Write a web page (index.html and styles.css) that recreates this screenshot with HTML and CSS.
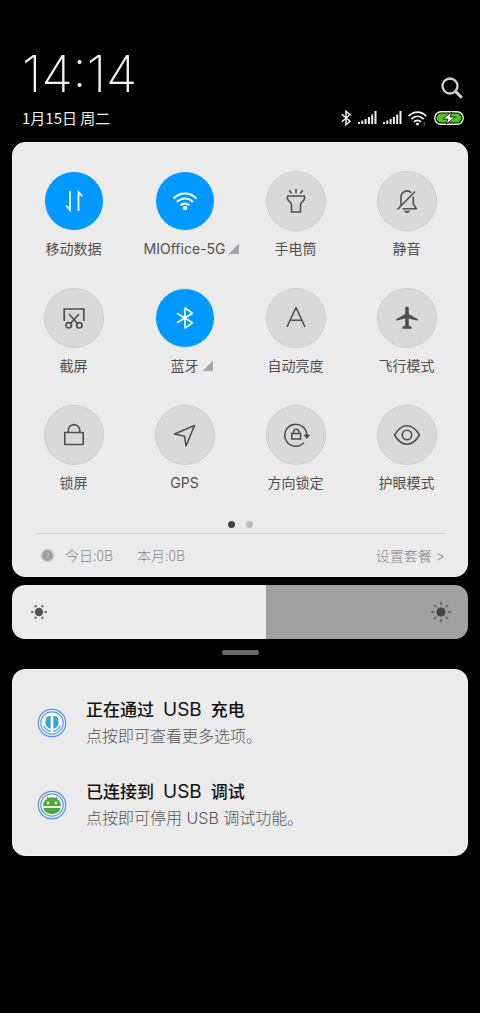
FILE: index.html
```html
<!DOCTYPE html>
<html lang="zh-CN">
<head>
<meta charset="utf-8">
<meta name="viewport" content="width=device-width, initial-scale=1">
<title>控制中心</title>
<link rel="stylesheet" href="styles.css">
</head>
<body>
<header class="header">
  <div class="header-top">
    <time class="clock">14:14</time>
    <button class="search" aria-label="搜索">
      <svg width="22" height="22" viewBox="0 0 22 22" fill="none" stroke="#d2d2d2"><circle cx="9" cy="9" r="7.500" stroke-width="2.300"/><path d="M14.300 14.300 20.800 20.800" stroke-width="3"/></svg>
    </button>
  </div>
  <div class="header-bottom">
    <span class="date">1月15日 周二</span>
    <div class="status">
      <svg class="st-bt" width="10" height="16" viewBox="0 0 10 16" fill="none" stroke="#f2f2f2" stroke-width="1.5"><path d="M.8 4.2 9 11.3 5 14.7V1.3l4 3.4L.8 11.8"/></svg>
      <svg class="st-sig" width="19" height="14" viewBox="0 0 19 14" fill="#f2f2f2"><path d="M0 11h2v2H0zM3.3 9.5h2V13h-2zM6.6 8h2v5h-2zM9.9 6h2v7h-2zM13.2 3.5h2V13h-2zM16.5 0h2v13h-2z"/></svg>
      <svg class="st-sig" width="19" height="14" viewBox="0 0 19 14" fill="#f2f2f2"><path d="M0 11h2v2H0zM3.3 9.5h2V13h-2zM6.6 8h2v5h-2zM9.9 6h2v7h-2zM13.2 3.5h2V13h-2zM16.5 0h2v13h-2z"/></svg>
      <svg class="st-wifi" width="20" height="15" viewBox="0 0 20 15" fill="none" stroke="#f2f2f2" stroke-width="1.9"><path d="M.8 5.2C6-.2 13-.2 18.2 5.2M3.3 8.2c3.8-3.8 8.6-3.8 12.400 0M6 11c2.200-2.200 4.800-2.200 7 0"/><circle cx="9.500" cy="13" r="1.500" fill="#f2f2f2" stroke="none"/><path d="M16.200 11v3.500" stroke-width="1" stroke="#888"/></svg>
      <svg width="30" height="14" viewBox="0 0 30 14"><rect x=".8" y=".8" width="28.400" height="12.400" rx="6.200" fill="#000" stroke="#f2f2f2" stroke-width="1.400"/><rect x="2.600" y="2.600" width="24.800" height="8.800" rx="4.400" fill="#4fc51c"/><path d="M17.800.8 9 8h5l-2 5.200L21.200 6H16z" fill="#fff" stroke="#000" stroke-width=".8"/></svg>
    </div>
  </div>
</header>
<main class="shade">
  <section class="panel">
    <div class="tiles">
      <button class="tile"><span class="disc on"><svg width="28" height="28" viewBox="0 0 28 28" fill="none" stroke="#fff" stroke-width="1.700"><path d="M10 4v19L6.300 18.600M18.500 24V5L22.200 9.400"/></svg></span><span class="label">移动数据</span></button>
      <button class="tile"><span class="disc on"><svg width="28" height="28" viewBox="0 0 28 28" fill="none" stroke="#fff" stroke-width="2"><path d="M2.500 11.500c6.600-6.800 16.400-6.800 23 0M6 15c4.600-4.800 11.400-4.800 16 0M9.500 18.400c2.600-2.700 6.400-2.700 9 0"/><circle cx="14" cy="21" r="2.200" fill="#fff" stroke="none"/></svg></span><span class="label more">MIOffice-5G</span></button>
      <button class="tile"><span class="disc"><svg width="28" height="28" viewBox="0 0 28 28" fill="none" stroke="#505050" stroke-width="1.600" stroke-linejoin="round"><path d="M5.500 9h17v2.500c0 2.500-4 3.500-4 6.500v7h-9v-7c0-3-4-4-4-6.500zM14 2.200v4M7.200 3.200l2.300 3M20.800 3.200l-2.300 3"/></svg></span><span class="label">手电筒</span></button>
      <button class="tile"><span class="disc"><svg width="28" height="28" viewBox="0 0 28 28" fill="none" stroke="#505050" stroke-width="1.600" stroke-linejoin="round"><path d="M22 4.500 4.500 22.500M8 18.500V10a6 6 0 0 1 10.300-4.200M20.300 9.500v7.500l3.200 4.700H9.500"/><path d="M11.500 24.200h5c-1.200 1.800-3.800 1.800-5 0z" fill="#505050" stroke-width="1"/></svg></span><span class="label">静音</span></button>

      <button class="tile"><span class="disc"><svg width="28" height="28" viewBox="0 0 28 28" fill="none" stroke="#505050" stroke-width="1.700"><path d="M4.200 17V5h19.600v12M9 10l8.500 9.500M19 10l-8.500 9.500"/><circle cx="8.700" cy="21.300" r="2.700"/><circle cx="19.300" cy="21.300" r="2.700"/></svg></span><span class="label">截屏</span></button>
      <button class="tile"><span class="disc on"><svg width="28" height="28" viewBox="0 0 28 28" fill="none" stroke="#fff" stroke-width="1.600" stroke-linejoin="round"><path d="M6 9.200 21.500 18.800 14 24V4l7.500 5.200L6 18.800"/></svg></span><span class="label more">蓝牙</span></button>
      <button class="tile"><span class="disc"><svg width="28" height="28" viewBox="0 0 28 28" fill="none" stroke="#505050" stroke-width="1.600" stroke-linejoin="round"><path d="M5 23 14 3.500 23 23M8.300 16.200h11.400"/></svg></span><span class="label">自动亮度</span></button>
      <button class="tile"><span class="disc"><svg width="28" height="28" viewBox="0 0 28 28" fill="#505050"><path d="M14 2.500c1.200 0 1.800.9 1.800 2V10l8.700 5c.6.400.7 1.700 0 1.700L15.800 14.500v7l2.500 1.300c.6.400.6 1.900 0 1.900H9.700c-.6 0-.6-1.500 0-1.900l2.500-1.300v-7L3.500 16.700c-.7 0-.6-1.300 0-1.700l8.700-5V4.500c0-1.100.6-2 1.800-2z"/></svg></span><span class="label">飞行模式</span></button>

      <button class="tile"><span class="disc"><svg width="28" height="28" viewBox="0 0 28 28" fill="none" stroke="#505050" stroke-width="1.600" stroke-linejoin="round"><path d="M4.800 11.500h18.400v12H4.800zM8.300 11.500V9.300a5.700 5.700 0 0 1 11.400 0v2.200"/></svg></span><span class="label">锁屏</span></button>
      <button class="tile"><span class="disc"><svg width="28" height="28" viewBox="0 0 28 28" fill="none" stroke="#505050" stroke-width="1.600" stroke-linejoin="round"><path d="M23.500 4.500 15 25l-1.500-9.800L3.500 13z"/></svg></span><span class="label">GPS</span></button>
      <button class="tile"><span class="disc"><svg width="28" height="28" viewBox="0 0 28 28" fill="none" stroke="#505050" stroke-width="1.600"><path d="M21.800 21.800A11 11 0 1 1 24.800 14.500"/><path d="M22.200 14h5.200l-2.600 3.500z" fill="#505050" stroke-width="1"/><path d="M9.800 12.500h8.800v5.500H9.800zM11.500 12.500V11a2.700 2.700 0 0 1 5.400 0v1.500"/></svg></span><span class="label">方向锁定</span></button>
      <button class="tile"><span class="disc"><svg width="28" height="28" viewBox="0 0 28 28" fill="none" stroke="#505050" stroke-width="1.600" stroke-linejoin="round"><path d="M1.500 14C5 8 9 4.800 14 4.800S23 8 26.500 14C23 20 19 23.200 14 23.200S5 20 1.500 14z"/><circle cx="14" cy="14" r="4.700"/></svg></span><span class="label">护眼模式</span></button>
    </div>
    <div class="dots"><span class="dot current"></span><span class="dot"></span></div>
    <div class="usage">
      <svg width="13" height="13" viewBox="0 0 13 13"><circle cx="6.500" cy="6.500" r="6.500" fill="#b8b8b8"/><circle cx="6.500" cy="6.500" r="4.800" fill="#9b9b9b"/><path d="M5 5.200c0-2 3-2 3 0 0 1.200-1.500 1-1.500 2.300M6.500 8.500v1" fill="none" stroke="#ccc" stroke-width=".9"/></svg>
      <span>今日:0B</span>
      <span class="month">本月:0B</span>
      <a class="plan" href="#plan"><span>设置套餐</span><span class="arrow">&gt;</span></a>
    </div>
  </section>

  <div class="brightness">
    <input class="range" type="range" min="0" max="1000" value="556" aria-label="亮度">
    <svg class="sun low" width="18" height="18" viewBox="0 0 18 18" fill="#555"><circle cx="9" cy="9" r="4.200"/><g fill="#777"><circle cx="2.300" cy="9" r="1.300"/><circle cx="15.700" cy="9" r="1.300"/><circle cx="5.600" cy="3.200" r="1.300"/><circle cx="12.400" cy="3.200" r="1.300"/><circle cx="5.600" cy="14.800" r="1.300"/><circle cx="12.400" cy="14.800" r="1.300"/></g></svg>
    <svg class="sun high" width="20" height="20" viewBox="0 0 20 20" stroke="#555" stroke-width="1.400"><circle cx="10" cy="10" r="4.500" fill="#444" stroke="none"/><path d="M10 0v3.200M10 16.800V20M0 10h3.200M16.800 10H20M3 3l2.200 2.200M14.800 14.800 17 17M17 3l-2.200 2.200M5.200 14.800 3 17"/></svg>
  </div>
  <div class="handle"></div>

  <section class="panel notices">
    <article class="notice">
      <svg width="30" height="30" viewBox="0 0 30 30"><circle cx="15" cy="15" r="13.700" fill="#f4f7fb" stroke="#5c93e6" stroke-width="1.300"/><circle cx="15" cy="15" r="11.200" fill="#fff" stroke="#5c93e6" stroke-width="1.200"/><path d="M9.500 8.800 13.700 7.800V20.500c-3.800-.6-5.500-3.500-5.300-6.500zM16.300 7.800l4.200 1L21.600 14c.2 3-1.500 5.900-5.300 6.500z" fill="#36a5dc"/><path d="M6.500 17.500c1.300 3 3.800 5.200 7.200 5.800M23.500 17.500c-1.300 3-3.800 5.200-7.200 5.800" stroke="#36a5dc" stroke-width="1.200" fill="none"/></svg>
      <div>
        <h2 class="title">正在通过<span class="latin">USB</span>充电</h2>
        <p class="text">点按即可查看更多选项。</p>
      </div>
    </article>
    <article class="notice">
      <svg width="30" height="30" viewBox="0 0 30 30"><circle cx="15" cy="15" r="13.700" fill="#f4f7fb" stroke="#5c93e6" stroke-width="1.300"/><circle cx="15" cy="15" r="11.200" fill="#fff" stroke="#5c93e6" stroke-width="1.200"/><path d="M6 16C6 12.500 7.800 10 10.300 8.800L9.200 6.500l2.800 1.300q3-.9 6 0l2.800-1.300-1.100 2.300C22.200 10 24 12.500 24 16zM6.300 18h17.400c-.8 3.500-4.400 6-8.700 6s-7.900-2.500-8.700-6z" fill="#46ab32"/><circle cx="11" cy="13" r="1.400" fill="#fff"/><circle cx="19" cy="13" r="1.400" fill="#fff"/></svg>
      <div>
        <h2 class="title">已连接到<span class="latin">USB</span>调试</h2>
        <p class="text">点按即可停用 USB 调试功能。</p>
      </div>
    </article>
  </section>
</main>
</body>
</html>
```
FILE: styles.css
```css
* {
  box-sizing: border-box;
}

body {
  margin: 0;
  min-height: 100vh;
  background: #000;
  color: #505050;
  font-family: Inter, "Noto Sans CJK SC", sans-serif;
  font-size: 14px;
}

button {
  padding: 0;
  border: 0;
  background: none;
  color: inherit;
  font: inherit;
}

svg {
  display: block;
  flex: none;
}

.header {
  padding: 48px 16px 14px 22px;
  color: #f2f2f2;
}

.header-top,
.header-bottom {
  display: flex;
  justify-content: space-between;
}

.header-top {
  align-items: flex-end;
  margin-bottom: 8px;
}

.clock {
  font-size: 51px;
  font-weight: 200;
  line-height: 52px;
}

.search {
  padding: 0 1px 1px 0;
}

.header-bottom {
  align-items: center;
}

.date {
  font-family: "Noto Sans CJK SC", sans-serif;
  font-size: 15px;
  line-height: 20px;
}

.status {
  display: flex;
  align-items: center;
}

.st-bt {
  margin-right: 7px;
}

.st-sig {
  margin-right: 6px;
}

.st-wifi {
  margin-right: 6px;
}

.shade {
  padding: 0 12px;
}

.panel {
  padding: 28px 5px 0;
  border: 1px solid #f4f4f4;
  border-radius: 13px;
  background: #ebebeb;
}

.tiles {
  display: grid;
  grid-template-columns: repeat(4, 1fr);
  row-gap: 29px;
}

.tile {
  display: flex;
  flex-direction: column;
  align-items: center;
  gap: 8px;
  min-width: 0;
}

.disc {
  display: grid;
  place-items: center;
  width: 60px;
  height: 60px;
  border: 1px solid #cbcbcb;
  border-radius: 50%;
  background: #d9d9d9;
}

.disc.on {
  border-color: #ebebeb;
  background: #0099ff;
}

.label {
  line-height: 20px;
  white-space: nowrap;
}

.more {
  display: flex;
  align-items: center;
  gap: 4px;
  padding-left: 14px;
}

.more::after {
  content: "";
  width: 10px;
  height: 10px;
  background: linear-gradient(135deg, transparent 50%, #a6a6a6 50%);
}

.dots {
  display: flex;
  justify-content: center;
  gap: 11px;
  margin-top: 28px;
}

.dot {
  width: 7px;
  height: 7px;
  border-radius: 50%;
  background: #bcbcbc;
}

.dot.current {
  background: #444;
}

.usage {
  display: flex;
  align-items: center;
  height: 43px;
  margin: 5px 17px 0 18px;
  padding-left: 5px;
  border-top: 1px solid #cdcdcd;
  color: #888;
  font-family: "Noto Sans CJK SC", sans-serif;
  font-weight: 300;
}

.usage svg {
  margin-right: 11px;
}

.month {
  margin-left: 24px;
}

.plan {
  display: flex;
  align-items: center;
  gap: 4px;
  margin-left: auto;
  color: inherit;
  text-decoration: none;
}

.arrow {
  font-family: Inter, sans-serif;
}

.brightness {
  display: grid;
  grid-template-columns: auto 1fr auto;
  align-items: center;
  height: 54px;
  margin-top: 8px;
  overflow: hidden;
  border-radius: 13px;
}

.range {
  grid-area: 1 / 1 / 2 / 4;
  width: 100%;
  height: 100%;
  margin: 0;
  appearance: none;
  background: linear-gradient(to right, #ebebeb 55.6%, #a0a0a0 55.6%);
}

.range::-webkit-slider-thumb {
  appearance: none;
  width: 1px;
  height: 54px;
  background: transparent;
}

.sun {
  grid-row: 1;
  pointer-events: none;
  z-index: 1;
}

.low {
  grid-column: 1;
  margin-left: 18px;
}

.high {
  grid-column: 3;
  margin-right: 17px;
}

.handle {
  width: 37px;
  height: 5px;
  margin: 11px auto 14px;
  border-radius: 3px;
  background: #666;
}

.notices {
  display: grid;
  gap: 30px;
  padding: 27px 24px 24px;
}

.notice {
  display: flex;
  align-items: center;
  gap: 19px;
}

.title,
.text {
  margin: 0;
  line-height: 26px;
}

.title {
  color: #111;
  font-size: 17px;
  font-weight: 500;
}

.latin {
  margin: 0 9px;
  font-size: 19px;
  font-weight: 400;
}

.text {
  color: #555;
  font-size: 16px;
  font-weight: 300;
}
```
